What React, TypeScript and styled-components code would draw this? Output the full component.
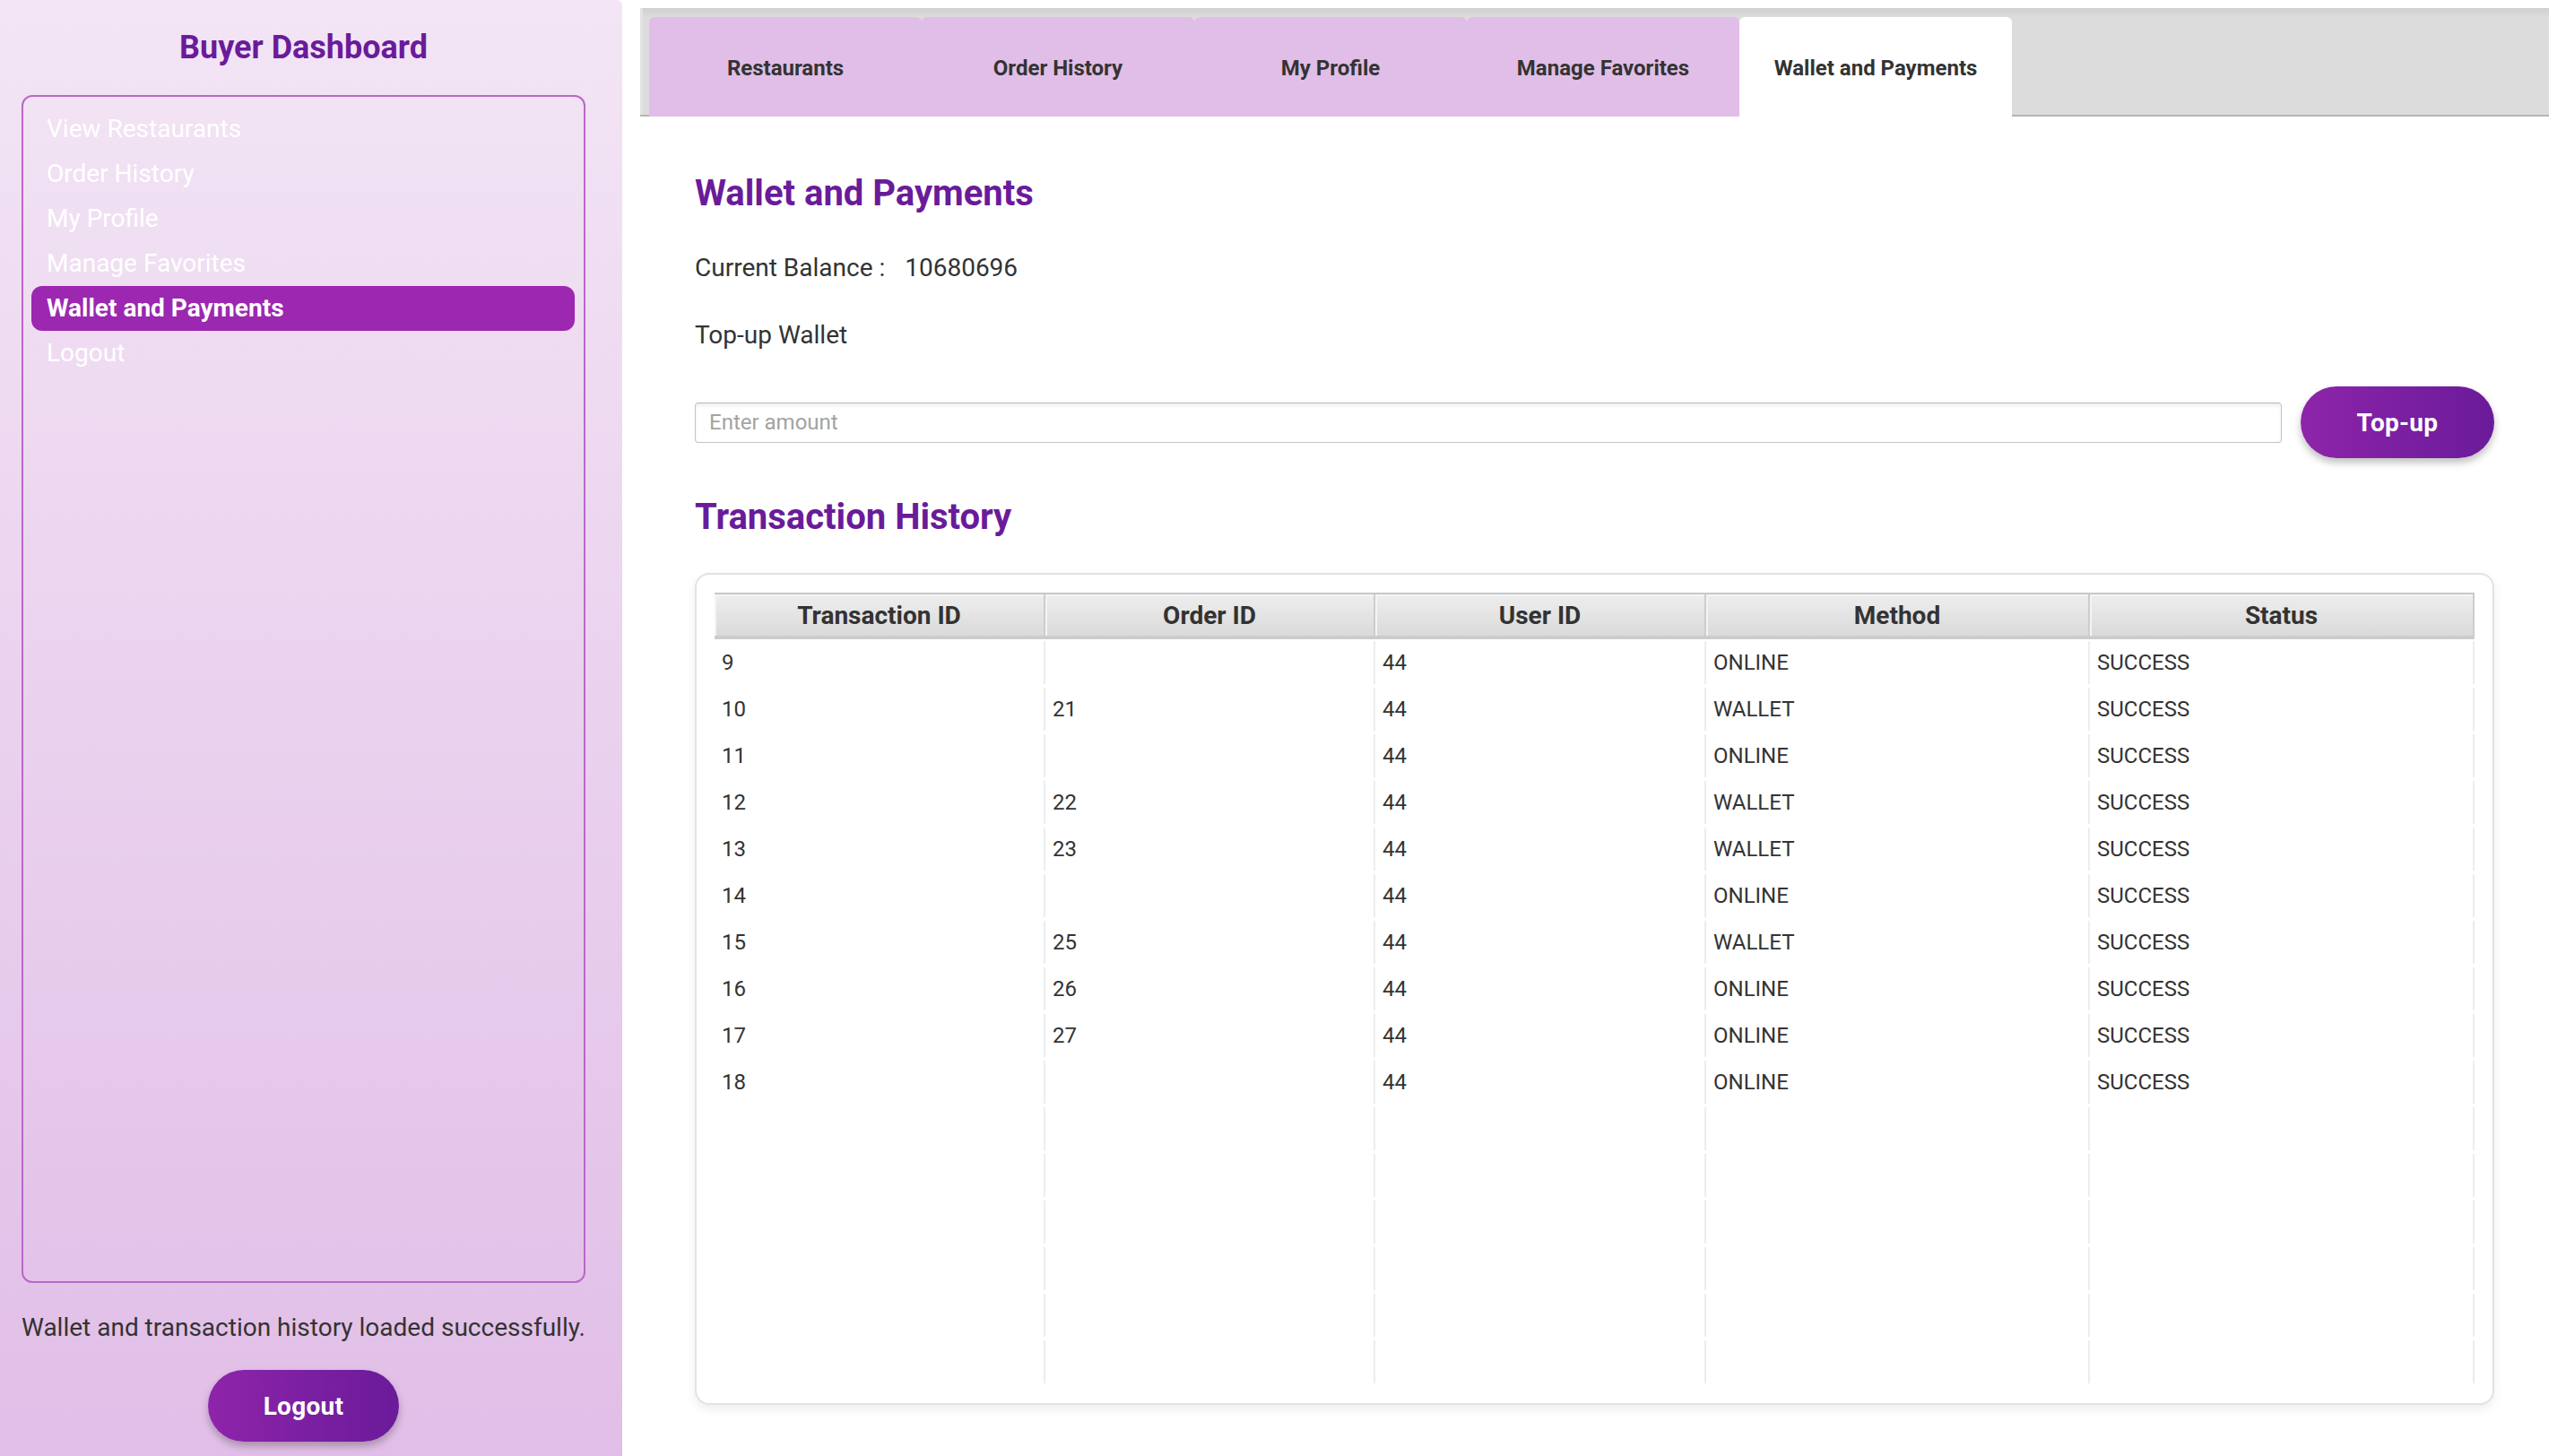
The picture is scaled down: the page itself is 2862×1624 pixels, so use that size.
import React from "react";
import styled, { createGlobalStyle } from "styled-components";

const GlobalStyle = createGlobalStyle`
  html, body, #root { margin: 0; padding: 0; height: 100%; }
  body { font-family: Roboto, "Liberation Sans", sans-serif; background: #ffffff; color: #333333; }
  * { box-sizing: border-box; }
`;

const Page = styled.div`
  display: flex;
  height: 100vh;
  width: 100vw;
  overflow: hidden;
`;

const Sidebar = styled.aside`
  width: 694px;
  flex-shrink: 0;
  display: flex;
  flex-direction: column;
  padding: 32px 41px 16px 24px;
  background: linear-gradient(to bottom, #f3e5f5 0%, #e1bee7 100%);
  border-top-right-radius: 6px;
`;

const SidebarTitle = styled.h1`
  margin: 0;
  font-size: 36px;
  font-weight: 700;
  line-height: normal;
  text-align: center;
  color: #6a1b9a;
`;

const NavBox = styled.nav`
  margin-top: 32px;
  flex: 1;
  display: flex;
  flex-direction: column;
  border: 2px solid #ba68c8;
  border-radius: 12px;
  padding: 11px 10px 9px 9px;
`;

const NavItem = styled.div<{ $active?: boolean }>`
  height: 50px;
  line-height: 50px;
  padding-left: 17px;
  font-size: 28px;
  color: #ffffff;
  border-radius: 12px;
  white-space: nowrap;
  font-weight: ${(p) => (p.$active ? 700 : 400)};
  background: ${(p) => (p.$active ? "#9c27b0" : "transparent")};
`;

const StatusText = styled.p`
  margin: 33px 0 0 0;
  font-size: 28px;
  line-height: normal;
  color: #333333;
  white-space: nowrap;
`;

const PillButton = styled.button<{ $width: number }>`
  width: ${(p) => p.$width}px;
  height: 80px;
  flex-shrink: 0;
  border: none;
  border-radius: 40px;
  background: linear-gradient(to right, #8e24aa, #6a1b9a);
  color: #ffffff;
  font-family: Roboto, "Liberation Sans", sans-serif;
  font-size: 28px;
  font-weight: 700;
  letter-spacing: 0.3px;
  box-shadow: 0 5px 9px rgba(0, 0, 0, 0.25);
  cursor: pointer;
`;

const LogoutButton = styled(PillButton)`
  margin: 31px auto 0 auto;
`;

const Main = styled.main`
  flex: 1;
  display: flex;
  flex-direction: column;
  padding: 9px 19px 0 20px;
  min-width: 0;
`;

const TabPane = styled.section`
  flex: 1;
  display: flex;
  flex-direction: column;
  background: #ffffff;
`;

const TabHeader = styled.div`
  height: 121px;
  display: flex;
  align-items: flex-end;
  padding: 10px 0 0 10px;
  background: linear-gradient(to bottom, #cfcfcf 0px, #dcdcdc 10px, #dcdcdc 100%);
  box-shadow: inset 0 -2px 0 #b4b4b4, inset 3px 0 0 #e2e2e2;
`;

const Tab = styled.div<{ $active?: boolean }>`
  width: 304px;
  height: 111px;
  display: flex;
  align-items: center;
  justify-content: center;
  padding-top: 3px;
  border-radius: 6px 6px 0 0;
  font-size: 24px;
  font-weight: 700;
  color: #333333;
  background: ${(p) => (p.$active ? "#ffffff" : "#e1bee7")};
`;

const Content = styled.div`
  display: flex;
  flex-direction: column;
  padding: 62px 61px 24px 61px;
`;

const Heading = styled.h2<{ $mt?: number }>`
  margin: ${(p) => p.$mt ?? 0}px 0 0 0;
  font-size: 40px;
  font-weight: 700;
  line-height: normal;
  color: #6a1b9a;
`;

const BodyText = styled.div<{ $mt: number }>`
  margin-top: ${(p) => p.$mt}px;
  font-size: 28px;
  line-height: normal;
  color: #333333;
  display: flex;
  gap: 22px;
`;

const TopupRow = styled.div`
  margin-top: 41px;
  display: flex;
  align-items: center;
  gap: 21px;
`;

const AmountInput = styled.input`
  flex: 1;
  height: 45px;
  border: 1px solid #c4c4c4;
  border-top-color: #b8b8b8;
  border-radius: 4px;
  padding: 0 15px;
  font-family: Roboto, "Liberation Sans", sans-serif;
  font-size: 24px;
  color: #333333;
  background: #ffffff;
  box-shadow: inset 0 3px 4px rgba(0, 0, 0, 0.06);
  outline: none;
  &::placeholder { color: #a3a3a3; }
`;

const Card = styled.div`
  margin-top: 39px;
  border: 2px solid #e2e2e2;
  border-radius: 16px;
  padding: 20px 20px 20px 20px;
  background: #ffffff;
  box-shadow: 0 5px 12px rgba(0, 0, 0, 0.07);
`;

const COLS = "369fr 368fr 369fr 428fr 429fr";

const HeaderRow = styled.div`
  display: grid;
  grid-template-columns: ${COLS};
  height: 52px;
  border-top: 2px solid #c8c8c8;
  border-bottom: 4px solid #cccccc;
  background: linear-gradient(to bottom, #eeeeee, #dadada);
`;

const HeaderCell = styled.div`
  display: flex;
  align-items: center;
  justify-content: center;
  font-size: 28px;
  font-weight: 700;
  color: #333333;
  border-right: 2px solid #cdcdcd;
  box-shadow: inset 2px 2px 0 #f4f4f4;
`;

const BodyRow = styled.div`
  display: grid;
  grid-template-columns: ${COLS};
  height: 52px;
`;

const BodyCell = styled.div`
  position: relative;
  display: flex;
  align-items: center;
  padding-left: 8px;
  font-size: 24px;
  color: #333333;
  &::after {
    content: "";
    position: absolute;
    right: 0;
    top: 2px;
    bottom: 2px;
    width: 2px;
    background: #ededed;
  }
`;

const navItems = ["View Restaurants", "Order History", "My Profile", "Manage Favorites", "Wallet and Payments", "Logout"];
const tabs = ["Restaurants", "Order History", "My Profile", "Manage Favorites", "Wallet and Payments"];
const headers = ["Transaction ID", "Order ID", "User ID", "Method", "Status"];

const rows: string[][] = [
  ["9", "", "44", "ONLINE", "SUCCESS"],
  ["10", "21", "44", "WALLET", "SUCCESS"],
  ["11", "", "44", "ONLINE", "SUCCESS"],
  ["12", "22", "44", "WALLET", "SUCCESS"],
  ["13", "23", "44", "WALLET", "SUCCESS"],
  ["14", "", "44", "ONLINE", "SUCCESS"],
  ["15", "25", "44", "WALLET", "SUCCESS"],
  ["16", "26", "44", "ONLINE", "SUCCESS"],
  ["17", "27", "44", "ONLINE", "SUCCESS"],
  ["18", "", "44", "ONLINE", "SUCCESS"],
];

const allRows = [...rows, ...Array.from({ length: 6 }, () => ["", "", "", "", ""])];

export default function App() {
  return (
    <>
      <GlobalStyle />
      <Page>
        <Sidebar>
          <SidebarTitle>Buyer Dashboard</SidebarTitle>
          <NavBox>
            {navItems.map((n) => (
              <NavItem key={n} $active={n === "Wallet and Payments"}>
                {n}
              </NavItem>
            ))}
          </NavBox>
          <StatusText>Wallet and transaction history loaded successfully.</StatusText>
          <LogoutButton $width={213}>Logout</LogoutButton>
        </Sidebar>
        <Main>
          <TabPane>
            <TabHeader>
              {tabs.map((t) => (
                <Tab key={t} $active={t === "Wallet and Payments"}>
                  {t}
                </Tab>
              ))}
            </TabHeader>
            <Content>
              <Heading>Wallet and Payments</Heading>
              <BodyText $mt={43}>
                <span>Current Balance :</span>
                <span>10680696</span>
              </BodyText>
              <BodyText $mt={42}>Top-up Wallet</BodyText>
              <TopupRow>
                <AmountInput placeholder="Enter amount" />
                <PillButton $width={216}>Top-up</PillButton>
              </TopupRow>
              <Heading $mt={42}>Transaction History</Heading>
              <Card>
                <HeaderRow>
                  {headers.map((h) => (
                    <HeaderCell key={h}>{h}</HeaderCell>
                  ))}
                </HeaderRow>
                {allRows.map((r, i) => (
                  <BodyRow key={i}>
                    {r.map((c, j) => (
                      <BodyCell key={j}>{c}</BodyCell>
                    ))}
                  </BodyRow>
                ))}
              </Card>
            </Content>
          </TabPane>
        </Main>
      </Page>
    </>
  );
}
